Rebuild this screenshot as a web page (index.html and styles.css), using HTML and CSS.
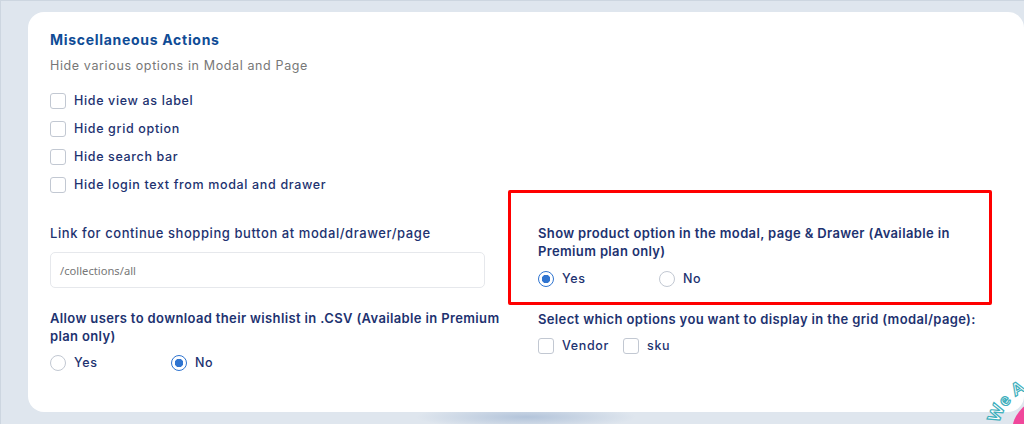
FILE: index.html
```html
<!DOCTYPE html>
<html lang="en">
<head>
  <meta charset="UTF-8">
  <meta name="viewport" content="width=device-width, initial-scale=1.0">
  <title>Miscellaneous Actions</title>
  <link rel="stylesheet" href="styles.css">
</head>
<body>
  <div class="shadow"></div>

  <div class="card">
    <h2>Miscellaneous Actions</h2>
    <p class="sub">Hide various options in Modal and Page</p>

    <div class="check-list">
      <label class="check"><span class="box"></span>Hide view as label</label>
      <label class="check"><span class="box"></span>Hide grid option</label>
      <label class="check"><span class="box"></span>Hide search bar</label>
      <label class="check"><span class="box"></span>Hide login text from modal and drawer</label>
    </div>

    <div class="grid">
      <div class="link-col">
        <div class="link-label">Link for continue shopping button at modal/drawer/page</div>
        <div class="input">/collections/all</div>
      </div>
      <div class="show-col">
        <div class="title">Show product option in the modal, page &amp; Drawer (Available in Premium plan only)</div>
        <div class="radios">
          <label class="radio"><span class="dot on"></span>Yes</label>
          <label class="radio"><span class="dot"></span>No</label>
        </div>
      </div>
      <div class="csv-col">
        <div class="title">Allow users to download their wishlist in .CSV (Available in Premium plan only)</div>
        <div class="radios">
          <label class="radio"><span class="dot"></span>Yes</label>
          <label class="radio"><span class="dot on"></span>No</label>
        </div>
      </div>
      <div class="grid-col">
        <div class="title">Select which options you want to display in the grid (modal/page):</div>
        <div class="inline-checks">
          <label class="check"><span class="box"></span>Vendor</label>
          <label class="check"><span class="box"></span>sku</label>
        </div>
      </div>
    </div>
  </div>

  <div class="highlight"></div>

  <svg class="badge" width="80" height="60" viewBox="0 0 80 60">
    <circle cx="101" cy="68" r="33" fill="#f0479b"/>
    <path id="arc" d="M 55 60 A 47 47 0 0 1 148 68" fill="none"/>
    <text class="badge-text"><textPath href="#arc">We Are</textPath></text>
  </svg>
</body>
</html>
```

FILE: styles.css
```css
* {
  box-sizing: border-box;
}
html, body {
  height: 100%;
}
body {
  margin: 0;
  padding: 12px 0 0 28px;
  background: #dfe6ee;
  border-top: 1px solid #cdd6e0;
  border-left: 1px solid #cdd6e0;
  font-family: "Inter", "Open Sans", sans-serif;
  color: #1d3270;
  overflow: hidden;
  position: relative;
}
.card {
  background: #fff;
  border-radius: 16px;
  height: 400px;
  margin-top: -1px;
  margin-left: -1px;
  padding: 19px 34px 0 22px;
  position: relative;
}
h2 {
  margin: 0;
  font-size: 14px;
  line-height: 17px;
  font-weight: 700;
  letter-spacing: 0.7px;
  color: #0f4c96;
}
.sub {
  margin: 10px 0 0;
  font-size: 12.5px;
  line-height: 16px;
  letter-spacing: 0.62px;
  color: #777;
}
.check-list {
  margin-top: 19px;
  display: flex;
  flex-direction: column;
  gap: 12px;
}
.check, .radio {
  display: flex;
  align-items: center;
  gap: 8px;
  font-size: 12.5px;
  line-height: 16px;
  font-weight: 500;
  letter-spacing: 0.65px;
}
.box {
  width: 16px;
  height: 16px;
  border: 1.5px solid #c2c8d2;
  border-radius: 3px;
  background: #fff;
}
.grid {
  margin-top: 22px;
  display: grid;
  grid-template-columns: 435px 1fr;
  column-gap: 53px;
}
.link-label {
  margin-top: 10px;
  font-size: 13px;
  line-height: 16px;
  font-weight: 500;
  letter-spacing: 0.57px;
}
.input {
  margin-top: 11px;
  width: 435px;
  height: 36px;
  padding: 0 9px;
  display: flex;
  align-items: center;
  border: 1px solid #e6e8ec;
  border-radius: 5px;
  font-family: "Noto Sans", sans-serif;
  font-size: 11.2px;
  color: #777;
}
.title {
  font-size: 13px;
  line-height: 18px;
  font-weight: 600;
  letter-spacing: 0.36px;
}
.show-col {
  padding-top: 9px;
}
.show-col .radios {
  margin-top: 11px;
}
.csv-col {
  margin-top: 21px;
  margin-right: -24px;
}
.grid-col {
  margin-top: 22px;
}
.radios {
  display: flex;
  margin-top: 10px;
}
.radio {
  width: 121px;
}
.dot {
  width: 16px;
  height: 16px;
  border: 1.5px solid #c2c8d2;
  border-radius: 50%;
}
.dot.on {
  border-color: #2f74d0;
  background: radial-gradient(circle, #2f74d0 0 4px, #fff 4.5px);
}
.inline-checks {
  display: flex;
  gap: 14px;
  margin-top: 10px;
}
.highlight {
  position: absolute;
  left: 507px;
  top: 189px;
  width: 484px;
  height: 115px;
  border: 3px solid #f00;
  border-radius: 2px;
}
.shadow {
  position: absolute;
  left: 414px;
  top: 404px;
  width: 222px;
  height: 24px;
  background: radial-gradient(ellipse at center, #b3c4da 0, #dfe6ee 70%);
}
.badge {
  position: absolute;
  right: 0;
  bottom: 0;
}
.badge-text {
  font-family: "Lato", sans-serif;
  font-size: 17px;
  font-weight: 900;
  letter-spacing: 1px;
  fill: #fff;
  stroke: #3fb0bd;
  stroke-width: 1.2px;
}
```
